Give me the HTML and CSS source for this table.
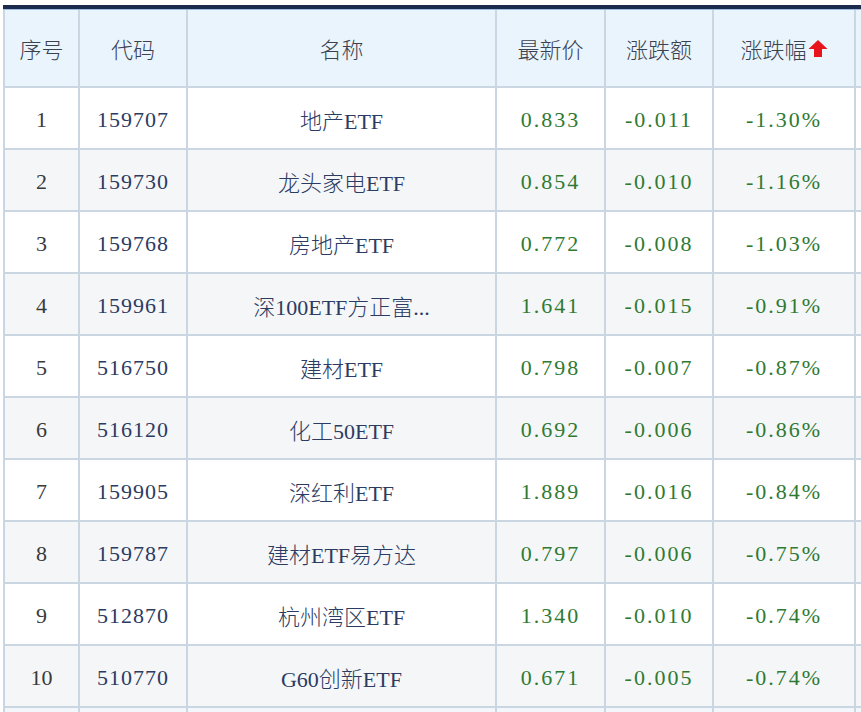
FILE: index.html
```html
<!DOCTYPE html>
<html lang="zh-CN">
<head>
<meta charset="utf-8">
<title>ETF 涨跌幅</title>
<link rel="stylesheet" href="styles.css">
</head>
<body>
<div class="page">
  <div class="topbar"></div>
  <div class="wrap">
    <table class="quote">
      <colgroup>
        <col class="c-idx"><col class="c-code"><col class="c-name"><col class="c-price"><col class="c-chg"><col class="c-pct"><col class="c-more">
      </colgroup>
      <thead>
        <tr>
          <th>序号</th><th>代码</th><th>名称</th><th>最新价</th><th>涨跌额</th>
          <th><span class="sort">涨跌幅<svg class="arrow" width="20" height="19" viewBox="0 0 20 19"><path d="M10 1 L19.5 10 L14 10 L14 18 L6 18 L6 10 L0.5 10 Z" fill="#e8141b"/></svg></span></th>
          <th></th>
        </tr>
      </thead>
      <tbody>
        <tr><td class="idx">1</td><td class="code">159707</td><td class="name">地产ETF</td><td class="num">0.833</td><td class="num">-0.011</td><td class="num">-1.30%</td><td></td></tr>
        <tr><td class="idx">2</td><td class="code">159730</td><td class="name">龙头家电ETF</td><td class="num">0.854</td><td class="num">-0.010</td><td class="num">-1.16%</td><td></td></tr>
        <tr><td class="idx">3</td><td class="code">159768</td><td class="name">房地产ETF</td><td class="num">0.772</td><td class="num">-0.008</td><td class="num">-1.03%</td><td></td></tr>
        <tr><td class="idx">4</td><td class="code">159961</td><td class="name">深100ETF方正富...</td><td class="num">1.641</td><td class="num">-0.015</td><td class="num">-0.91%</td><td></td></tr>
        <tr><td class="idx">5</td><td class="code">516750</td><td class="name">建材ETF</td><td class="num">0.798</td><td class="num">-0.007</td><td class="num">-0.87%</td><td></td></tr>
        <tr><td class="idx">6</td><td class="code">516120</td><td class="name">化工50ETF</td><td class="num">0.692</td><td class="num">-0.006</td><td class="num">-0.86%</td><td></td></tr>
        <tr><td class="idx">7</td><td class="code">159905</td><td class="name">深红利ETF</td><td class="num">1.889</td><td class="num">-0.016</td><td class="num">-0.84%</td><td></td></tr>
        <tr><td class="idx">8</td><td class="code">159787</td><td class="name">建材ETF易方达</td><td class="num">0.797</td><td class="num">-0.006</td><td class="num">-0.75%</td><td></td></tr>
        <tr><td class="idx">9</td><td class="code">512870</td><td class="name">杭州湾区ETF</td><td class="num">1.340</td><td class="num">-0.010</td><td class="num">-0.74%</td><td></td></tr>
        <tr><td class="idx">10</td><td class="code">510770</td><td class="name">G60创新ETF</td><td class="num">0.671</td><td class="num">-0.005</td><td class="num">-0.74%</td><td></td></tr>
        <tr class="tail"><td></td><td></td><td></td><td></td><td></td><td></td><td></td></tr>
      </tbody>
    </table>
  </div>
</div>
</body>
</html>
```
FILE: styles.css
```css
html, body {
  margin: 0;
  padding: 0;
  background: #ffffff;
  overflow: hidden;
}
.page {
  width: 861px;
  height: 712px;
  overflow: hidden;
  padding: 5px 0 0 3px;
  box-sizing: border-box;
}
.topbar {
  width: 900px;
  height: 4px;
  background: #1c2b4b;
  border-bottom: 1px solid #9fbbe0;
}
.wrap {
  width: 1000px;
}
.quote {
  border-collapse: collapse;
  table-layout: fixed;
  width: 1000px;
  font-family: "Liberation Serif", "Noto Sans CJK SC", serif;
  font-size: 22px;
}
.c-idx { width: 75px; }
.c-code { width: 108px; }
.c-name { width: 309px; }
.c-price { width: 109px; }
.c-chg { width: 108px; }
.c-pct { width: 142px; }
.c-more { width: 149px; }
.quote th, .quote td {
  border: 2px solid #cad7e3;
  border-top: 0;
  text-align: center;
  vertical-align: middle;
  padding: 0;
  white-space: nowrap;
  overflow: hidden;
}
.quote th {
  height: 76px;
  background: #eaf4fd;
  color: #3a4250;
  font-family: "Noto Sans CJK SC", sans-serif;
  font-size: 22px;
  font-weight: 300;
}
.quote td {
  height: 56px;
  padding-top: 4px;
}
.quote td.name {
  height: 58px;
  padding-top: 2px;
}
.quote tbody tr:nth-child(odd) td { background: #ffffff; }
.quote tbody tr:nth-child(even) td { background: #f5f6f8; }
.quote tbody tr.tail td { background: #f3f6fa; }
.idx {
  color: #3a3a3a;
}
.code {
  color: #2b3b62;
  letter-spacing: 1px;
}
.name {
  color: #2b3b62;
  font-family: "Liberation Serif", "Noto Sans CJK SC", serif;
  font-size: 22px;
  font-weight: 300;
}
.num {
  color: #2f7a33;
  letter-spacing: 2px;
}
.sort {
  display: inline-flex;
  align-items: center;
  gap: 1px;
}
.arrow {
  display: block;
}
```
